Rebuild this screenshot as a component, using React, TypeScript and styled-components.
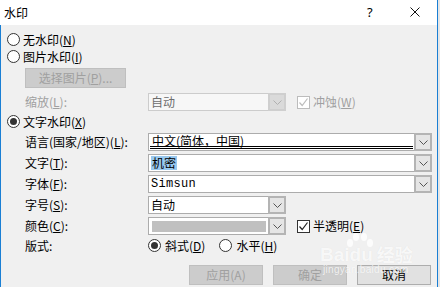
import React from "react";
import styled, { createGlobalStyle } from "styled-components";

const Global = createGlobalStyle`
  html, body { margin: 0; padding: 0; background: #e6e6e6; }
  body {
    font-family: "Noto Sans CJK SC", "Noto Sans", sans-serif;
    font-size: 12px;
    color: #000;
  }
  * { box-sizing: border-box; }
  u { text-decoration-thickness: 1px; text-underline-offset: 1px; }
`;

const Window = styled.div`
  position: relative;
  width: 438px;
  height: 287px;
  border-right: 1px solid #1a7fd4;
  background: #f0f0f0;
  display: flex;
  flex-direction: column;
  overflow: hidden;
`;

const TitleBar = styled.div`
  height: 25px;
  flex: none;
  background: #fff;
  display: flex;
  align-items: center;
  padding: 0 17px 0 4px;
`;

const Title = styled.div`
  font-size: 12px;
  line-height: 14px;
  flex: 1;
`;

const Help = styled.div`
  width: 8px;
  font-family: "Noto Sans", sans-serif;
  font-size: 13px;
  line-height: 14px;
  margin-top: -1px;
`;

const Close = styled.svg`
  width: 10px;
  height: 10px;
  margin-left: 35px;
  margin-top: -1px;
`;

const Body = styled.div`
  flex: 1;
  border-left: 1px solid #1a7fd4;
  padding: 6px 6px 0 6px;
  display: flex;
  flex-direction: column;
`;

const RadioRow = styled.label<{ $mt?: number }>`
  display: flex;
  align-items: center;
  gap: 3px;
  height: 17px;
  margin-top: ${(p) => p.$mt ?? 0}px;
  line-height: 14px;
`;

const RadioCircle = styled.span<{ $checked?: boolean }>`
  width: 13px;
  height: 13px;
  flex: none;
  border-radius: 50%;
  border: 1px solid #333;
  background: #fff;
  display: flex;
  align-items: center;
  justify-content: center;
  &::after {
    content: "";
    display: ${(p) => (p.$checked ? "block" : "none")};
    width: 7px;
    height: 7px;
    border-radius: 50%;
    background: #333;
  }
`;

const Indent = styled.div`
  margin-left: 18px;
  display: flex;
  flex-direction: column;
`;

const PushButton = styled.div<{ $disabled?: boolean; $width: number }>`
  width: ${(p) => p.$width}px;
  height: 20px;
  flex: none;
  display: flex;
  align-items: center;
  justify-content: center;
  line-height: 14px;
  background: ${(p) => (p.$disabled ? "#cccccc" : "#e1e1e1")};
  border: 1px solid ${(p) => (p.$disabled ? "#bfbfbf" : "#adadad")};
  color: ${(p) => (p.$disabled ? "#a0a0a0" : "#000")};
`;

const SelectButtonRow = styled.div`
  margin-top: 3px;
  display: flex;
`;

const FormRow = styled.div<{ $mt: number; $h?: number }>`
  display: flex;
  align-items: center;
  height: ${(p) => p.$h ?? 18}px;
  margin-top: ${(p) => p.$mt}px;
  line-height: 14px;
`;

const FieldLabel = styled.div<{ $disabled?: boolean }>`
  width: 123px;
  flex: none;
  color: ${(p) => (p.$disabled ? "#a0a0a0" : "#000")};
  white-space: nowrap;
`;

const Combo = styled.div<{ $width: number; $disabled?: boolean }>`
  width: ${(p) => p.$width}px;
  height: 18px;
  flex: none;
  display: flex;
  border: 1px solid ${(p) => (p.$disabled ? "#cccccc" : "#acacac")};
  background: ${(p) => (p.$disabled ? "#f7f7f7" : "#fff")};
  color: ${(p) => (p.$disabled ? "#6d6d6d" : "#000")};
`;

const ComboField = styled.div<{ $mono?: boolean; $double?: boolean }>`
  flex: 1;
  min-width: 0;
  display: flex;
  align-items: center;
  padding-left: 2px;
  white-space: nowrap;
  font-family: ${(p) =>
    p.$mono ? '"Liberation Mono", monospace' : '"Noto Sans CJK SC", sans-serif'};
  letter-spacing: ${(p) => (p.$mono ? "0.3px" : "0")};
  border-bottom: ${(p) => (p.$double ? "3px double #000" : "none")};
  margin: ${(p) => (p.$double ? "0 1px 1px 1px" : "0")};
  padding-top: ${(p) => (p.$double ? "1px" : "0")};
`;

const Selected = styled.span`
  background: #99c9ef;
  padding: 0 1px;
`;

const Swatch = styled.div`
  flex: 1;
  height: 11px;
  margin: 0 2px 0 1px;
  background: #c0c0c0;
`;

const ComboButton = styled.div<{ $disabled?: boolean }>`
  width: 18px;
  flex: none;
  margin: -1px -1px -1px 0;
  border: 2px solid ${(p) => (p.$disabled ? "#cfcfcf" : "#b4b4b4")};
  background: ${(p) => (p.$disabled ? "#dadada" : "#e5e5e5")};
  display: flex;
  align-items: center;
  justify-content: center;
`;

const CheckWrap = styled.div`
  display: flex;
  align-items: center;
  gap: 3px;
  margin-left: 11px;
`;

const CheckBox = styled.span<{ $disabled?: boolean }>`
  width: 13px;
  height: 13px;
  flex: none;
  border: 1px solid ${(p) => (p.$disabled ? "#bcbcbc" : "#333")};
  background: #fff;
  display: flex;
  align-items: center;
  justify-content: center;
`;

const CheckText = styled.span<{ $disabled?: boolean }>`
  color: ${(p) => (p.$disabled ? "#a0a0a0" : "#000")};
`;

const RadioOption = styled.label<{ $ml?: number }>`
  display: flex;
  align-items: center;
  gap: 4px;
  margin-left: ${(p) => p.$ml ?? 0}px;
`;

const ButtonBar = styled.div`
  display: flex;
  justify-content: flex-end;
  gap: 10px;
  margin-top: 12px;
`;

const Watermark = styled.div`
  position: absolute;
  left: 320px;
  top: 230px;
  color: rgba(255, 255, 255, 0.8);
  text-shadow: 0 0 1px rgba(0, 0, 0, 0.08);
  pointer-events: none;
  display: flex;
  flex-direction: column;
`;

const WmLogo = styled.div`
  position: relative;
  display: flex;
  align-items: flex-end;
  height: 34px;
  font-family: "Liberation Sans", sans-serif;
  font-weight: bold;
  font-size: 19px;
  line-height: 19px;
`;

const WmPaw = styled.svg`
  position: absolute;
  left: 26px;
  top: 2px;
`;

const WmCn = styled.span`
  font-family: "Noto Sans CJK SC", sans-serif;
  font-weight: bold;
  font-size: 18px;
  margin-left: 4px;
`;

const WmUrl = styled.div`
  font-family: "Liberation Sans", sans-serif;
  font-size: 10px;
  line-height: 12px;
  margin-left: 3px;
  letter-spacing: 0.3px;
`;

const Chevron = ({ color = "#555" }: { color?: string }) => (
  <svg width="9" height="5" viewBox="0 0 9 5">
    <polyline points="0.5,0.5 4.5,4.5 8.5,0.5" fill="none" stroke={color} strokeWidth="1" />
  </svg>
);

const Tick = ({ color = "#222" }: { color?: string }) => (
  <svg width="11" height="11" viewBox="0 0 11 11">
    <polyline points="1.5,5.5 4.2,8.5 9.5,1.5" fill="none" stroke={color} strokeWidth="1.2" />
  </svg>
);

const Mn = ({ c }: { c: string }) => (
  <>
    (<u>{c}</u>)
  </>
);

export default function App() {
  return (
    <>
      <Global />
      <Window>
        <TitleBar>
          <Title>水印</Title>
          <Help>?</Help>
          <Close viewBox="0 0 10 10">
            <path d="M0.5 0.5 L9.5 9.5 M9.5 0.5 L0.5 9.5" stroke="#111" strokeWidth="1" />
          </Close>
        </TitleBar>
        <Body>
          <RadioRow>
            <RadioCircle />
            <span>
              无水印<Mn c="N" />
            </span>
          </RadioRow>
          <RadioRow>
            <RadioCircle />
            <span>
              图片水印<Mn c="I" />
            </span>
          </RadioRow>
          <Indent>
            <SelectButtonRow>
              <PushButton $disabled $width={101}>
                选择图片(<u>P</u>)...
              </PushButton>
            </SelectButtonRow>
            <FormRow $mt={5}>
              <FieldLabel $disabled>
                缩放<Mn c="L" />:
              </FieldLabel>
              <Combo $width={138} $disabled>
                <ComboField>自动</ComboField>
                <ComboButton $disabled>
                  <Chevron color="#b0b0b0" />
                </ComboButton>
              </Combo>
              <CheckWrap>
                <CheckBox $disabled>
                  <Tick color="#bcbcbc" />
                </CheckBox>
                <CheckText $disabled>
                  冲蚀<Mn c="W" />
                </CheckText>
              </CheckWrap>
            </FormRow>
          </Indent>
          <RadioRow $mt={2}>
            <RadioCircle $checked />
            <span>
              文字水印<Mn c="X" />
            </span>
          </RadioRow>
          <Indent>
            <FormRow $mt={3}>
              <FieldLabel>
                语言(国家/地区)<Mn c="L" />:
              </FieldLabel>
              <Combo $width={284}>
                <ComboField $double>中文(简体，中国)</ComboField>
                <ComboButton>
                  <Chevron />
                </ComboButton>
              </Combo>
            </FormRow>
            <FormRow $mt={3}>
              <FieldLabel>
                文字<Mn c="T" />:
              </FieldLabel>
              <Combo $width={284}>
                <ComboField>
                  <Selected>机密</Selected>
                </ComboField>
                <ComboButton>
                  <Chevron />
                </ComboButton>
              </Combo>
            </FormRow>
            <FormRow $mt={3}>
              <FieldLabel>
                字体<Mn c="F" />:
              </FieldLabel>
              <Combo $width={284}>
                <ComboField $mono>Simsun</ComboField>
                <ComboButton>
                  <Chevron />
                </ComboButton>
              </Combo>
            </FormRow>
            <FormRow $mt={3}>
              <FieldLabel>
                字号<Mn c="S" />:
              </FieldLabel>
              <Combo $width={138}>
                <ComboField>自动</ComboField>
                <ComboButton>
                  <Chevron />
                </ComboButton>
              </Combo>
            </FormRow>
            <FormRow $mt={3}>
              <FieldLabel>
                颜色<Mn c="C" />:
              </FieldLabel>
              <Combo $width={138}>
                <ComboField>
                  <Swatch />
                </ComboField>
                <ComboButton>
                  <Chevron />
                </ComboButton>
              </Combo>
              <CheckWrap>
                <CheckBox>
                  <Tick />
                </CheckBox>
                <CheckText>
                  半透明<Mn c="E" />
                </CheckText>
              </CheckWrap>
            </FormRow>
            <FormRow $mt={3} $h={15}>
              <FieldLabel>版式:</FieldLabel>
              <RadioOption>
                <RadioCircle $checked />
                <span>
                  斜式<Mn c="D" />
                </span>
              </RadioOption>
              <RadioOption $ml={14}>
                <RadioCircle />
                <span>
                  水平<Mn c="H" />
                </span>
              </RadioOption>
            </FormRow>
          </Indent>
          <ButtonBar>
            <PushButton $disabled $width={74}>
              应用(A)
            </PushButton>
            <PushButton $disabled $width={74}>
              确定
            </PushButton>
            <PushButton $width={74}>取消</PushButton>
          </ButtonBar>
        </Body>
        <Watermark>
          <WmLogo>
            <WmPaw width="28" height="16" viewBox="0 0 28 16">
              <ellipse cx="4" cy="11" rx="3" ry="4" fill="rgba(255,255,255,0.8)" />
              <ellipse cx="10" cy="5" rx="3" ry="4" fill="rgba(255,255,255,0.8)" />
              <ellipse cx="18" cy="5" rx="3" ry="4" fill="rgba(255,255,255,0.8)" />
              <ellipse cx="24" cy="11" rx="3" ry="4" fill="rgba(255,255,255,0.8)" />
            </WmPaw>
            <span>Bai</span>
            <span>du</span>
            <WmCn>经验</WmCn>
          </WmLogo>
          <WmUrl>jingyan.baidu.com</WmUrl>
        </Watermark>
      </Window>
    </>
  );
}
